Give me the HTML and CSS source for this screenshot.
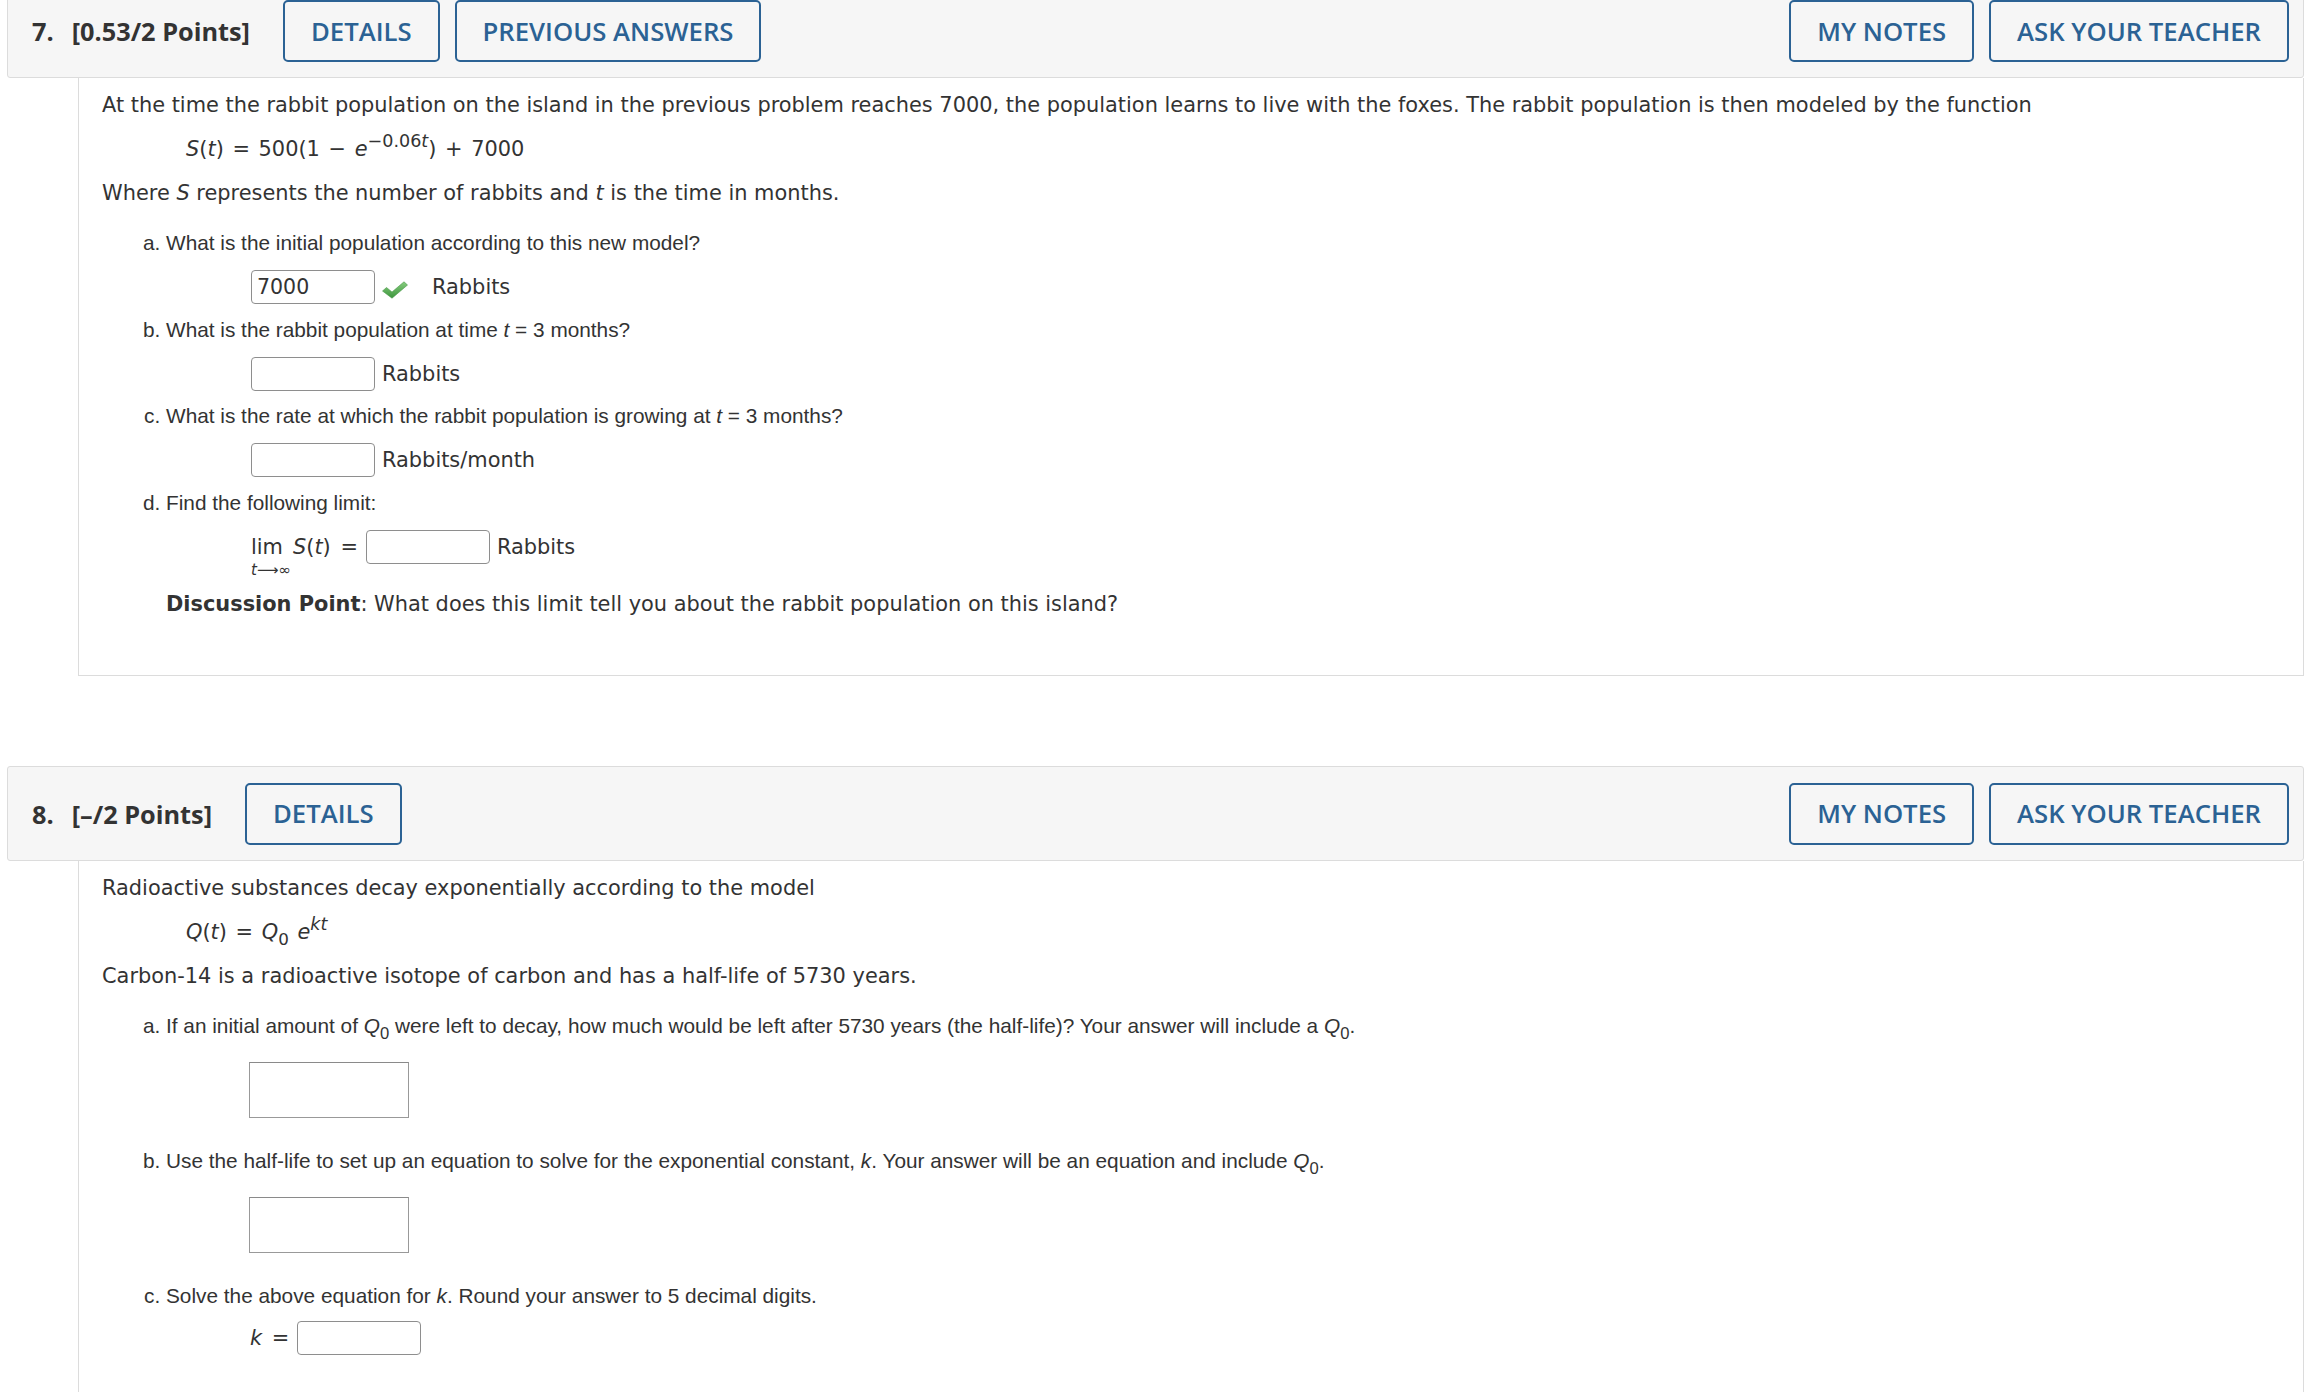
FILE: index.html
```html
<!DOCTYPE html>
<html lang="en">
<head>
<meta charset="utf-8">
<title>Questions</title>
<link rel="stylesheet" href="styles.css">
</head>
<body>
<div class="page">

  <section class="q q7">
    <div class="q-head">
      <div class="q-title"><span class="qnum">7.</span><span class="pts">[0.53/2 Points]</span></div>
      <button class="btn">DETAILS</button>
      <button class="btn">PREVIOUS ANSWERS</button>
      <button class="btn push">MY NOTES</button>
      <button class="btn">ASK YOUR TEACHER</button>
    </div>
    <div class="q-body">
      <p class="txt">At the time the rabbit population on the island in the previous problem reaches 7000, the population learns to live with the foxes. The rabbit population is then modeled by the function</p>
      <p class="txt formula"><i>S</i>(<i>t</i>) = 500(1 − <i>e</i><sup>−0.06<i>t</i></sup>) + 7000</p>
      <p class="txt">Where <i>S</i> represents the number of rabbits and <i>t</i> is the time in months.</p>
      <ol class="parts">
        <li>
          <div class="label">What is the initial population according to this new model?</div>
          <div class="row">
            <input class="ans" type="text" value="7000">
            <svg class="check" width="26" height="18" viewBox="0 0 26 18" aria-hidden="true">
              <defs><linearGradient id="g" x1="0" y1="0" x2="0" y2="1"><stop offset="0" stop-color="#86cc7e"/><stop offset="1" stop-color="#3d953d"/></linearGradient></defs>
              <polygon points="0.5,10 4.5,6.5 10,11 22,0.8 25.5,4 10,17.2" fill="url(#g)" stroke="#4a9a4a" stroke-width="0.6" stroke-linejoin="round"/>
            </svg>
            <span class="unit unit-a">Rabbits</span>
          </div>
        </li>
        <li>
          <div class="label">What is the rabbit population at time <i>t</i> = 3 months?</div>
          <div class="row">
            <input class="ans" type="text">
            <span class="unit">Rabbits</span>
          </div>
        </li>
        <li>
          <div class="label">What is the rate at which the rabbit population is growing at <i>t</i> = 3 months?</div>
          <div class="row">
            <input class="ans" type="text">
            <span class="unit">Rabbits/month</span>
          </div>
        </li>
        <li>
          <div class="label">Find the following limit:</div>
          <div class="row math">
            <span class="lim">lim<span class="lim-sub"><i>t</i>⟶∞</span></span>
            <span class="eq"><i>S</i>(<i>t</i>) =</span>
            <input class="ans" type="text">
            <span class="unit">Rabbits</span>
          </div>
        </li>
      </ol>
      <p class="txt discuss"><b>Discussion Point</b>: What does this limit tell you about the rabbit population on this island?</p>
    </div>
  </section>

  <section class="q q8">
    <div class="q-head">
      <div class="q-title"><span class="qnum">8.</span><span class="pts">[–/2 Points]</span></div>
      <button class="btn">DETAILS</button>
      <button class="btn push">MY NOTES</button>
      <button class="btn">ASK YOUR TEACHER</button>
    </div>
    <div class="q-body">
      <p class="txt">Radioactive substances decay exponentially according to the model</p>
      <p class="txt formula"><i>Q</i>(<i>t</i>) = <i>Q</i><sub>0</sub> <i>e</i><sup><i>kt</i></sup></p>
      <p class="txt">Carbon-14 is a radioactive isotope of carbon and has a half-life of 5730 years.</p>
      <ol class="parts">
        <li>
          <div class="label">If an initial amount of <i>Q</i><sub>0</sub> were left to decay, how much would be left after 5730 years (the half-life)? Your answer will include a <i>Q</i><sub>0</sub>.</div>
          <div class="bigrow"><div class="bigbox"></div></div>
        </li>
        <li>
          <div class="label">Use the half-life to set up an equation to solve for the exponential constant, <i>k</i>. Your answer will be an equation and include <i>Q</i><sub>0</sub>.</div>
          <div class="bigrow"><div class="bigbox"></div></div>
        </li>
        <li>
          <div class="label">Solve the above equation for <i>k</i>. Round your answer to 5 decimal digits.</div>
          <div class="row row-k math">
            <span class="eq"><i>k</i> =</span>
            <input class="ans" type="text">
          </div>
        </li>
      </ol>
    </div>
  </section>

</div>
</body>
</html>
```

FILE: styles.css
```css
html, body {
  margin: 0;
  padding: 0;
  background: #ffffff;
}

body {
  font-family: "DejaVu Sans", Verdana, sans-serif;
  color: #333333;
  overflow: hidden;
}

.page {
  padding: 0 10px 0 7px;
  margin-top: -17px;
}

.q {
  margin-bottom: 90px;
}

/* ---------- header bar ---------- */
.q-head {
  display: flex;
  align-items: center;
  gap: 15px;
  background: #f6f6f6;
  border: 1px solid #dcdcdc;
  border-radius: 3px;
  padding: 16px 14px 15px 24px;
}

.q-title {
  font-family: "Open Sans", sans-serif;
  font-weight: 700;
  font-size: 25.3px;
  color: #333333;
  margin-right: 18px;
  white-space: nowrap;
}

.qnum {
  margin-right: 18px;
}

.btn {
  height: 62px;
  box-sizing: border-box;
  border: 2px solid #2b6294;
  border-radius: 5px;
  background: transparent;
  color: #2b6294;
  font-family: "Open Sans", sans-serif;
  font-weight: 600;
  font-size: 25.7px;
  padding: 0 26px;
  white-space: nowrap;
  cursor: pointer;
}

.btn.push {
  margin-left: auto;
}

/* ---------- body ---------- */
.q-body {
  margin-left: 71px;
  border-left: 1px solid #dcdcdc;
  border-right: 1px solid #dcdcdc;
  border-bottom: 1px solid #dcdcdc;
  padding: 12px 24px 56px 23px;
}

.q8 .q-body {
  padding-bottom: 200px;
}

.txt {
  font-size: 20.9px;
  line-height: 30px;
  margin: 0 0 14px;
}

.formula {
  padding-left: 84px;
  word-spacing: 2px;
}

sup {
  font-size: 84%;
  line-height: 0;
  vertical-align: 0.5em;
}

sub {
  font-size: 80%;
  line-height: 0;
  vertical-align: -0.35em;
}

.parts {
  list-style: lower-alpha;
  margin: 20px 0 0;
  padding-left: 64px;
  font-family: "Liberation Sans", Arial, sans-serif;
  font-size: 20.8px;
}

.parts li {
  margin-bottom: 10.5px;
}

.label {
  line-height: 30px;
}

.row {
  display: flex;
  align-items: center;
  height: 34px;
  margin-top: 12px;
  margin-left: 85px;
  font-family: "DejaVu Sans", Verdana, sans-serif;
  font-size: 20.9px;
}

.math {
  word-spacing: 3px;
}

.ans {
  box-sizing: border-box;
  width: 124px;
  height: 34px;
  border: 1px solid #8e8e8e;
  border-radius: 4px;
  padding: 0 5px;
  margin: 0;
  font-family: "DejaVu Sans", Verdana, sans-serif;
  font-size: 20.5px;
  color: #333333;
  background: #ffffff;
}

.check {
  margin-left: 7px;
  margin-top: 5px;
  flex: none;
}

.unit {
  margin-left: 7px;
  word-spacing: normal;
}

.unit-a {
  margin-left: 24px;
}

.lim {
  position: relative;
  margin-right: 10px;
}

.lim-sub {
  position: absolute;
  left: 0;
  top: 27px;
  font-size: 15px;
  line-height: 16px;
  word-spacing: normal;
  white-space: nowrap;
}

.eq {
  margin-right: 8px;
}

.discuss {
  margin: 25px 0 0 64px;
}

.bigrow {
  margin: 21px 0 28px 83px;
}

.parts li:has(.bigrow) {
  margin-bottom: 0;
}

.bigbox {
  width: 160px;
  height: 56px;
  box-sizing: border-box;
  border: 1px solid #999999;
  border-top-color: #8a8a8a;
  background: #ffffff;
}

.row-k {
  margin-top: 10px;
  margin-left: 84px;
}
```
